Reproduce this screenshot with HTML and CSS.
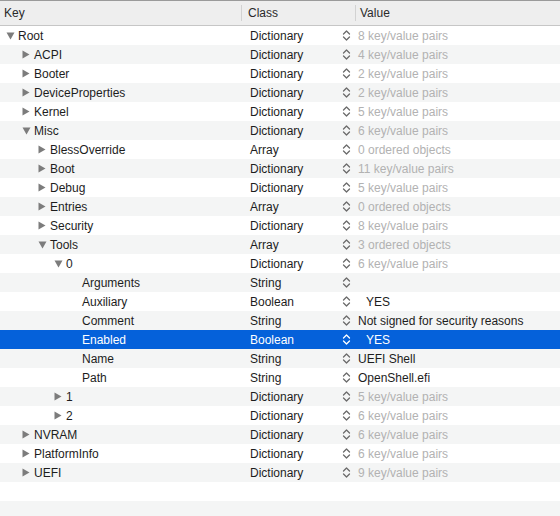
FILE: index.html
```html
<!DOCTYPE html>
<html>
<head>
<meta charset="utf-8">
<link rel="stylesheet" href="styles.css">
</head>
<body>
<svg width="0" height="0" class="defs">
  <defs>
    <symbol id="tr" viewBox="0 0 8 9"><polygon points="0.5,0.5 7.5,4.5 0.5,8.5"/></symbol>
    <symbol id="td" viewBox="0 0 9 8"><polygon points="0.5,0.5 8.5,0.5 4.5,7.5"/></symbol>
    <symbol id="st" viewBox="0 0 9 13"><path d="M1.5 5 L4.5 2 L7.5 5 M1.5 8 L4.5 11 L7.5 8"/></symbol>
  </defs>
</svg>
<div class="outline">
  <div class="header">
    <div class="hkey">Key</div>
    <div class="hclass"><span class="sep"></span>Class</div>
    <div class="hvalue"><span class="sep"></span>Value</div>
  </div>
  <div class="rows">
    <div class="row"><div class="key"><span class="tri l0"><svg class="td"><use href="#td"/></svg></span><span>Root</span></div><div class="cls"><span>Dictionary</span><svg class="step"><use href="#st"/></svg></div><div class="val dim">8 key/value pairs</div></div>
    <div class="row"><div class="key"><span class="tri l1"><svg class="tr"><use href="#tr"/></svg></span><span>ACPI</span></div><div class="cls"><span>Dictionary</span><svg class="step"><use href="#st"/></svg></div><div class="val dim">4 key/value pairs</div></div>
    <div class="row"><div class="key"><span class="tri l1"><svg class="tr"><use href="#tr"/></svg></span><span>Booter</span></div><div class="cls"><span>Dictionary</span><svg class="step"><use href="#st"/></svg></div><div class="val dim">2 key/value pairs</div></div>
    <div class="row"><div class="key"><span class="tri l1"><svg class="tr"><use href="#tr"/></svg></span><span>DeviceProperties</span></div><div class="cls"><span>Dictionary</span><svg class="step"><use href="#st"/></svg></div><div class="val dim">2 key/value pairs</div></div>
    <div class="row"><div class="key"><span class="tri l1"><svg class="tr"><use href="#tr"/></svg></span><span>Kernel</span></div><div class="cls"><span>Dictionary</span><svg class="step"><use href="#st"/></svg></div><div class="val dim">5 key/value pairs</div></div>
    <div class="row"><div class="key"><span class="tri l1"><svg class="td"><use href="#td"/></svg></span><span>Misc</span></div><div class="cls"><span>Dictionary</span><svg class="step"><use href="#st"/></svg></div><div class="val dim">6 key/value pairs</div></div>
    <div class="row"><div class="key"><span class="tri l2"><svg class="tr"><use href="#tr"/></svg></span><span>BlessOverride</span></div><div class="cls"><span>Array</span><svg class="step"><use href="#st"/></svg></div><div class="val dim">0 ordered objects</div></div>
    <div class="row"><div class="key"><span class="tri l2"><svg class="tr"><use href="#tr"/></svg></span><span>Boot</span></div><div class="cls"><span>Dictionary</span><svg class="step"><use href="#st"/></svg></div><div class="val dim">11 key/value pairs</div></div>
    <div class="row"><div class="key"><span class="tri l2"><svg class="tr"><use href="#tr"/></svg></span><span>Debug</span></div><div class="cls"><span>Dictionary</span><svg class="step"><use href="#st"/></svg></div><div class="val dim">5 key/value pairs</div></div>
    <div class="row"><div class="key"><span class="tri l2"><svg class="tr"><use href="#tr"/></svg></span><span>Entries</span></div><div class="cls"><span>Array</span><svg class="step"><use href="#st"/></svg></div><div class="val dim">0 ordered objects</div></div>
    <div class="row"><div class="key"><span class="tri l2"><svg class="tr"><use href="#tr"/></svg></span><span>Security</span></div><div class="cls"><span>Dictionary</span><svg class="step"><use href="#st"/></svg></div><div class="val dim">8 key/value pairs</div></div>
    <div class="row"><div class="key"><span class="tri l2"><svg class="td"><use href="#td"/></svg></span><span>Tools</span></div><div class="cls"><span>Array</span><svg class="step"><use href="#st"/></svg></div><div class="val dim">3 ordered objects</div></div>
    <div class="row"><div class="key"><span class="tri l3"><svg class="td"><use href="#td"/></svg></span><span>0</span></div><div class="cls"><span>Dictionary</span><svg class="step"><use href="#st"/></svg></div><div class="val dim">6 key/value pairs</div></div>
    <div class="row"><div class="key"><span class="tri l4"></span><span>Arguments</span></div><div class="cls"><span>String</span><svg class="step"><use href="#st"/></svg></div><div class="val"></div></div>
    <div class="row"><div class="key"><span class="tri l4"></span><span>Auxiliary</span></div><div class="cls"><span>Boolean</span><svg class="step"><use href="#st"/></svg></div><div class="val bool">YES</div></div>
    <div class="row"><div class="key"><span class="tri l4"></span><span>Comment</span></div><div class="cls"><span>String</span><svg class="step"><use href="#st"/></svg></div><div class="val">Not signed for security reasons</div></div>
    <div class="row sel"><div class="key"><span class="tri l4"></span><span>Enabled</span></div><div class="cls"><span>Boolean</span><svg class="step"><use href="#st"/></svg></div><div class="val bool">YES</div></div>
    <div class="row"><div class="key"><span class="tri l4"></span><span>Name</span></div><div class="cls"><span>String</span><svg class="step"><use href="#st"/></svg></div><div class="val">UEFI Shell</div></div>
    <div class="row"><div class="key"><span class="tri l4"></span><span>Path</span></div><div class="cls"><span>String</span><svg class="step"><use href="#st"/></svg></div><div class="val">OpenShell.efi</div></div>
    <div class="row"><div class="key"><span class="tri l3"><svg class="tr"><use href="#tr"/></svg></span><span>1</span></div><div class="cls"><span>Dictionary</span><svg class="step"><use href="#st"/></svg></div><div class="val dim">5 key/value pairs</div></div>
    <div class="row"><div class="key"><span class="tri l3"><svg class="tr"><use href="#tr"/></svg></span><span>2</span></div><div class="cls"><span>Dictionary</span><svg class="step"><use href="#st"/></svg></div><div class="val dim">6 key/value pairs</div></div>
    <div class="row"><div class="key"><span class="tri l1"><svg class="tr"><use href="#tr"/></svg></span><span>NVRAM</span></div><div class="cls"><span>Dictionary</span><svg class="step"><use href="#st"/></svg></div><div class="val dim">6 key/value pairs</div></div>
    <div class="row"><div class="key"><span class="tri l1"><svg class="tr"><use href="#tr"/></svg></span><span>PlatformInfo</span></div><div class="cls"><span>Dictionary</span><svg class="step"><use href="#st"/></svg></div><div class="val dim">6 key/value pairs</div></div>
    <div class="row"><div class="key"><span class="tri l1"><svg class="tr"><use href="#tr"/></svg></span><span>UEFI</span></div><div class="cls"><span>Dictionary</span><svg class="step"><use href="#st"/></svg></div><div class="val dim">9 key/value pairs</div></div>
    <div class="row"></div>
    <div class="row"></div>
    <div class="row"></div>
  </div>
</div>
</body>
</html>
```

FILE: styles.css
```css
html, body {
  margin: 0;
  padding: 0;
  background: #ffffff;
}
body {
  font-family: "Liberation Sans", Arial, sans-serif;
  font-size: 12px;
  color: #1d1d1d;
  width: 560px;
  height: 516px;
  overflow: hidden;
}
.defs {
  position: absolute;
  width: 0;
  height: 0;
}
.outline {
  display: flex;
  flex-direction: column;
}
.header {
  display: grid;
  grid-template-columns: 241px 114px 1fr;
  height: 24px;
  border-top: 1px solid #9a9a9a;
  border-bottom: 1px solid #c6c6c6;
  background: #eeeeee;
  color: #2a2a2a;
  align-items: center;
}
.hkey { padding-left: 4px; }
.hclass, .hvalue {
  display: flex;
  align-items: center;
  height: 100%;
}
.sep {
  width: 1px;
  height: 16px;
  background: #d2d2d2;
  margin-right: 6px;
}
.hvalue .sep { margin-right: 4px; }
.row {
  display: grid;
  grid-template-columns: 241px 114px 1fr;
  height: 19px;
  align-items: center;
}
.row:nth-child(even) { background: #f4f5f5; }
.row.sel { background: #0561da; color: #ffffff; }
.key {
  display: flex;
  align-items: center;
  white-space: nowrap;
}
.tri {
  width: 12px;
  height: 19px;
  display: flex;
  align-items: center;
  padding-left: 6px;
  flex: none;
}
.tri svg { fill: #7c7c7c; }
.tr { width: 8px; height: 9px; }
.td { width: 9px; height: 8px; }
.l0 { margin-left: 0; }
.l1 { margin-left: 16px; }
.l2 { margin-left: 32px; }
.l3 { margin-left: 48px; }
.l4 { margin-left: 64px; }
.cls {
  display: flex;
  align-items: center;
  justify-content: space-between;
  padding-left: 9px;
  padding-right: 4px;
}
.step {
  display: block;
  width: 9px;
  height: 13px;
  fill: none;
  stroke: #6b6b6b;
  stroke-width: 1.3;
  stroke-linecap: round;
  stroke-linejoin: round;
}
.sel .step { stroke: #ffffff; }
.val {
  padding-left: 3px;
  white-space: nowrap;
}
.val.dim { color: #b2b2b2; }
.val.bool { padding-left: 11px; }
```
